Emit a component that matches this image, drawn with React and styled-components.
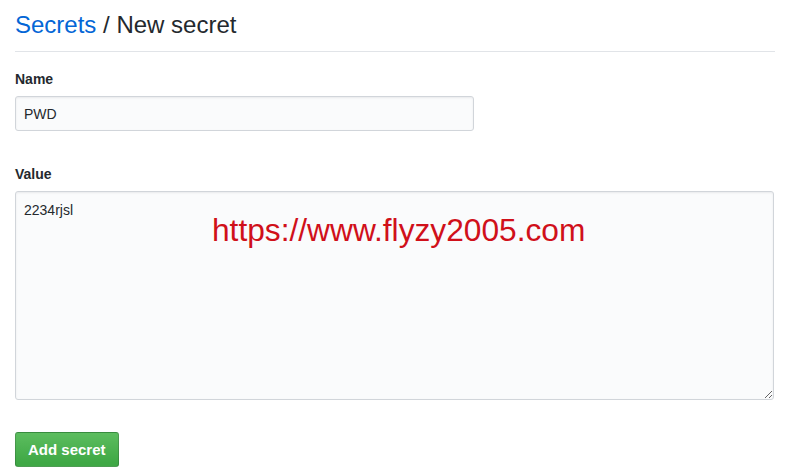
import React from 'react'
import styled, { createGlobalStyle } from 'styled-components'

const GlobalStyle = createGlobalStyle`
  body {
    margin: 0;
    background: #fff;
    font-family: "Liberation Sans", Arial, sans-serif;
    color: #24292e;
  }
`

const Page = styled.div`
  padding: 0 25px 0 15px;
`

const Header = styled.div`
  padding: 10px 0 11px 0;
  border-bottom: 1px solid #e1e4e8;
  font-size: 24px;
  line-height: 30px;
  font-weight: 400;
`

const Crumb = styled.a`
  color: #0366d6;
  text-decoration: none;
`

const Field = styled.div`
  margin-top: ${p => p.top}px;
`

const Label = styled.label`
  display: block;
  font-size: 14px;
  font-weight: 600;
  line-height: 20px;
  margin-bottom: 7px;
`

const Input = styled.input`
  box-sizing: border-box;
  width: 459px;
  height: 35px;
  padding: 6px 8px;
  font-family: inherit;
  font-size: 14px;
  color: #24292e;
  background: #fafbfc;
  border: 1px solid #d1d5da;
  border-radius: 3px;
  box-shadow: inset 0 1px 2px rgba(27, 31, 35, 0.075);
  outline: none;
`

const AreaWrap = styled.div`
  position: relative;
`

const TextArea = styled.textarea`
  box-sizing: border-box;
  display: block;
  width: 759px;
  height: 209px;
  padding: 8px;
  font-family: inherit;
  font-size: 14px;
  line-height: 20px;
  color: #24292e;
  background: #fafbfc;
  border: 1px solid #d1d5da;
  border-radius: 3px;
  box-shadow: inset 0 1px 2px rgba(27, 31, 35, 0.075);
  outline: none;
  resize: vertical;
`

const Watermark = styled.div`
  position: absolute;
  left: 197px;
  top: 21px;
  font-family: "Liberation Sans", Arial, sans-serif;
  font-size: 31.7px;
  line-height: 36px;
  color: #d0101a;
  pointer-events: none;
`

const Button = styled.button`
  margin-top: 32px;
  height: 35px;
  padding: 0 12px;
  font-family: inherit;
  font-size: 15px;
  font-weight: 700;
  color: #fff;
  background-image: linear-gradient(-180deg, #5cbd5f 0%, #3fa845 90%);
  border: 1px solid rgba(27, 31, 35, 0.2);
  border-radius: 3px;
  cursor: pointer;
`

const App = () => {
  return (
    <>
      <GlobalStyle />
      <Page>
        <Header>
          <Crumb href="#">Secrets</Crumb> / New secret
        </Header>
        <Field top={17}>
          <Label>Name</Label>
          <Input defaultValue="PWD" />
        </Field>
        <Field top={33}>
          <Label>Value</Label>
          <AreaWrap>
            <TextArea defaultValue="2234rjsl" />
            <Watermark>https://www.flyzy2005.com</Watermark>
          </AreaWrap>
        </Field>
        <Button>Add secret</Button>
      </Page>
    </>
  )
}

export default App
